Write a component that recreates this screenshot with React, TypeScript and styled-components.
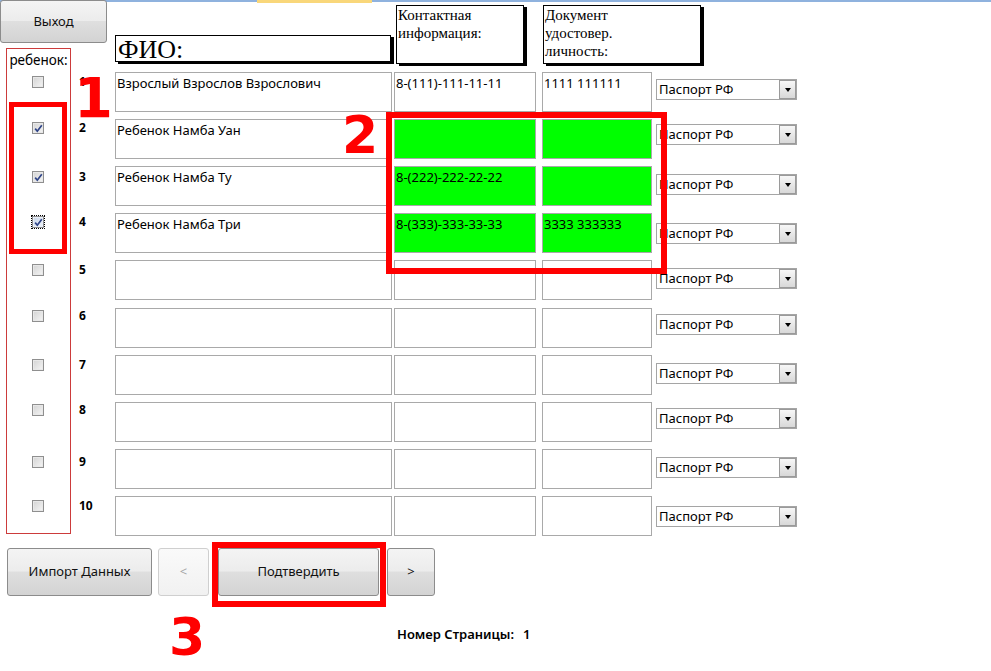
import React from "react";
import styled, { createGlobalStyle } from "styled-components";

const GlobalStyle = createGlobalStyle`
  html, body { margin: 0; padding: 0; background: #fff; }
  body {
    font-family: "Noto Sans", "Open Sans", sans-serif;
    font-size: 13px;
    color: #000;
  }
  * { box-sizing: border-box; }
`;

const Page = styled.div`
  position: relative;
  width: 991px;
  height: 671px;
  overflow: hidden;
`;

const TopStrip = styled.div`
  position: absolute;
  top: 0;
  left: 0;
  right: 0;
  height: 2px;
  background: #8fb2de;
  &::after {
    content: "";
    position: absolute;
    left: 257px;
    top: 0;
    width: 115px;
    height: 3px;
    background: #f9d77a;
  }
`;

const Form = styled.div`
  display: grid;
  grid-template-columns: 6px 65px 44px 277px 2px 142px 6px 110px 4px 141px;
  grid-template-rows: 5px 30px 13px 24px repeat(4, 47px) 48px repeat(5, 47px);
`;

const BaseButton = styled.button<{ $w: number; $ml?: number; $disabled?: boolean }>`
  position: relative;
  z-index: 1;
  width: ${(p) => p.$w}px;
  height: 48px;
  margin-left: ${(p) => p.$ml ?? 0}px;
  padding: 0 0 2px;
  display: flex;
  align-items: center;
  justify-content: center;
  font-family: "Noto Sans", "Open Sans", sans-serif;
  font-size: 13px;
  color: ${(p) => (p.$disabled ? "#a6a6a6" : "#111")};
  border: 1px solid ${(p) => (p.$disabled ? "#cfcfcf" : "#8c8c8c")};
  border-radius: 3px;
  background: ${(p) =>
    p.$disabled
      ? "linear-gradient(#fafafa, #f1f1f1)"
      : "linear-gradient(#f4f4f4 0%, #ececec 48%, #dfdfdf 50%, #d3d3d3 100%)"};
  cursor: default;
`;

const ExitButton = styled(BaseButton)`
  grid-column: 1 / 4;
  grid-row: 1 / 4;
  align-self: start;
  height: 43px;
`;

const ChildFrame = styled.div`
  grid-column: 2;
  grid-row: 4 / 15;
  margin-bottom: 9px;
  border: 1px solid #cc3b3b;
`;

const ChildLabel = styled.div`
  grid-column: 2;
  grid-row: 4;
  display: flex;
  align-items: center;
  justify-content: center;
  padding-bottom: 1px;
  font-size: 13.5px;
`;

const HeaderBox = styled.div`
  align-self: start;
  background: #fff;
  border: 1px solid #000;
  box-shadow: 3px 2px 0 #000;
  font-family: "Liberation Serif", "Times New Roman", serif;
  color: #000;
`;

const FioHeader = styled(HeaderBox)`
  grid-column: 4;
  grid-row: 3 / 5;
  width: 276px;
  height: 27px;
  padding: 1px 2px 0;
  font-size: 26px;
  line-height: 26px;
`;

const InfoHeader = styled(HeaderBox)<{ $col: string; $w: number; $ml: number }>`
  grid-column: ${(p) => p.$col};
  grid-row: 2 / 5;
  margin-left: ${(p) => p.$ml}px;
  width: ${(p) => p.$w}px;
  height: 59px;
  padding: 0 1px;
  font-size: 15px;
  line-height: 18px;
`;

const CheckCell = styled.span<{ $row: number; $top: number; $checked: boolean; $focus?: boolean }>`
  grid-column: 2;
  grid-row: ${(p) => p.$row};
  justify-self: center;
  align-self: start;
  margin-top: ${(p) => p.$top}px;
  margin-left: -1px;
  width: 12px;
  height: 12px;
  border: 1px solid #8f8f8f;
  background: ${(p) =>
    p.$focus
      ? "linear-gradient(135deg, #c9d7ea, #eef3fa)"
      : "linear-gradient(135deg, #d3d3d3, #f5f5f5)"};
  box-shadow: inset 0 0 0 1px ${(p) => (p.$focus ? "#e9eef7" : "#e8e8e8")};
  outline: ${(p) => (p.$focus ? "1px dotted #000" : "none")};
  display: flex;
  align-items: center;
  justify-content: center;
  svg {
    display: ${(p) => (p.$checked ? "block" : "none")};
  }
`;

const RowNumber = styled.div<{ $row: number; $top: number }>`
  grid-column: 3;
  grid-row: ${(p) => p.$row};
  align-self: start;
  margin-top: ${(p) => p.$top}px;
  padding-left: 8px;
  font-size: 12px;
  font-weight: 700;
  line-height: 12px;
`;

const Field = styled.div<{ $row: number; $col: number; $green?: boolean }>`
  grid-column: ${(p) => p.$col};
  grid-row: ${(p) => p.$row};
  align-self: start;
  height: 40px;
  border: 1px solid #a9a9a9;
  background: ${(p) => (p.$green ? "#00ff00" : "#fff")};
  padding: 2px 1px;
  font-size: 13px;
  line-height: 16px;
  white-space: nowrap;
  overflow: hidden;
`;

const Select = styled.div<{ $row: number; $top: number }>`
  grid-column: 10;
  grid-row: ${(p) => p.$row};
  align-self: start;
  margin-top: ${(p) => p.$top}px;
  height: 21px;
  border: 1px solid #a5a5a5;
  background: #fff;
  display: flex;
  align-items: stretch;
`;

const SelectText = styled.div`
  flex: 1;
  padding-left: 2px;
  font-size: 13px;
  line-height: 19px;
  white-space: nowrap;
`;

const SelectArrow = styled.div`
  width: 17px;
  border: 1px solid #9a9a9a;
  background: linear-gradient(#f7f7f7, #d8d8d8);
  display: flex;
  align-items: center;
  justify-content: center;
  &::before {
    content: "";
    border-left: 3.5px solid transparent;
    border-right: 3.5px solid transparent;
    border-top: 4px solid #000;
  }
`;

const ButtonRow = styled.div`
  display: flex;
  align-items: flex-start;
  margin-top: 5px;
  padding-left: 7px;
`;

const PageInfo = styled.div`
  display: flex;
  gap: 9px;
  margin: 29px 0 0 397px;
  font-size: 13px;
  font-weight: 600;
  line-height: 18px;
`;

const AnnoBox = styled.div<{ $x: number; $y: number; $w: number; $h: number; $s: number }>`
  position: absolute;
  left: ${(p) => p.$x}px;
  top: ${(p) => p.$y}px;
  width: ${(p) => p.$w}px;
  height: ${(p) => p.$h}px;
  border: ${(p) => p.$s}px solid #ff0000;
  pointer-events: none;
  z-index: 2;
`;

const AnnoDigit = styled.div<{ $x: number; $y: number; $size: number }>`
  position: absolute;
  left: ${(p) => p.$x}px;
  top: ${(p) => p.$y}px;
  font-family: "DejaVu Sans", "Liberation Sans", sans-serif;
  font-weight: 700;
  font-size: ${(p) => p.$size}px;
  line-height: 1;
  color: #ff0000;
  z-index: 2;
`;

type Row = {
  name: string;
  contact: string;
  doc: string;
  checked: boolean;
  green: boolean;
  focus?: boolean;
  cb: number;
  dd: number;
};

const rows: Row[] = [
  { name: "Взрослый Взрослов Взрослович", contact: "8-(111)-111-11-11", doc: "1111 111111", checked: false, green: false, cb: 4, dd: 7 },
  { name: "Ребенок Намба Уан", contact: "", doc: "", checked: true, green: true, cb: 3, dd: 5 },
  { name: "Ребенок Намба Ту", contact: "8-(222)-222-22-22", doc: "", checked: true, green: true, cb: 5, dd: 8 },
  { name: "Ребенок Намба Три", contact: "8-(333)-333-33-33", doc: "3333 333333", checked: true, green: true, focus: true, cb: 3, dd: 10 },
  { name: "", contact: "", doc: "", checked: false, green: false, cb: 4, dd: 8 },
  { name: "", contact: "", doc: "", checked: false, green: false, cb: 2, dd: 6 },
  { name: "", contact: "", doc: "", checked: false, green: false, cb: 4, dd: 8 },
  { name: "", contact: "", doc: "", checked: false, green: false, cb: 2, dd: 6 },
  { name: "", contact: "", doc: "", checked: false, green: false, cb: 7, dd: 8 },
  { name: "", contact: "", doc: "", checked: false, green: false, cb: 4, dd: 10 },
];

const Check = () => (
  <svg width="9" height="9" viewBox="0 0 9 9">
    <path d="M1.2 4.6 L3.3 7.2 L7.8 1.2" fill="none" stroke="#2f4487" strokeWidth="1.7" />
  </svg>
);

export default function App() {
  return (
    <Page>
      <GlobalStyle />
      <TopStrip />
      <Form>
        <ExitButton $w={107}>Выход</ExitButton>
        <ChildFrame />
        <ChildLabel>ребенок:</ChildLabel>
        <FioHeader>ФИО:</FioHeader>
        <InfoHeader $col="6 / 8" $w={128} $ml={2}>
          Контактная
          <br />
          информация:
        </InfoHeader>
        <InfoHeader $col="8 / 11" $w={158} $ml={1}>
          Документ
          <br />
          удостовер.
          <br />
          личность:
        </InfoHeader>
        {rows.map((r, i) => {
          const row = 5 + i;
          return (
            <React.Fragment key={i}>
              <CheckCell $row={row} $top={r.cb} $checked={r.checked} $focus={r.focus}>
                <Check />
              </CheckCell>
              <RowNumber $row={row} $top={r.cb}>
                {i + 1}
              </RowNumber>
              <Field $row={row} $col={4}>
                {r.name}
              </Field>
              <Field $row={row} $col={6} $green={r.green}>
                {r.contact}
              </Field>
              <Field $row={row} $col={8} $green={r.green}>
                {r.doc}
              </Field>
              <Select $row={row} $top={r.dd}>
                <SelectText>Паспорт РФ</SelectText>
                <SelectArrow />
              </Select>
            </React.Fragment>
          );
        })}
      </Form>
      <ButtonRow>
        <BaseButton $w={145}>Импорт Данных</BaseButton>
        <BaseButton $w={51} $ml={6} $disabled>
          &lt;
        </BaseButton>
        <BaseButton $w={161} $ml={9}>
          Подтвердить
        </BaseButton>
        <BaseButton $w={48} $ml={8}>
          &gt;
        </BaseButton>
      </ButtonRow>
      <PageInfo>
        <span>Номер Страницы:</span>
        <span>1</span>
      </PageInfo>

      <AnnoBox $x={9} $y={102} $w={58} $h={152} $s={5} />
      <AnnoBox $x={386} $y={112} $w={281} $h={162} $s={6} />
      <AnnoBox $x={212} $y={542} $w={174} $h={65} $s={6} />
      <AnnoDigit $x={74} $y={70} $size={56}>1</AnnoDigit>
      <AnnoDigit $x={342} $y={109} $size={52}>2</AnnoDigit>
      <AnnoDigit $x={169} $y={611} $size={52}>3</AnnoDigit>
    </Page>
  );
}
